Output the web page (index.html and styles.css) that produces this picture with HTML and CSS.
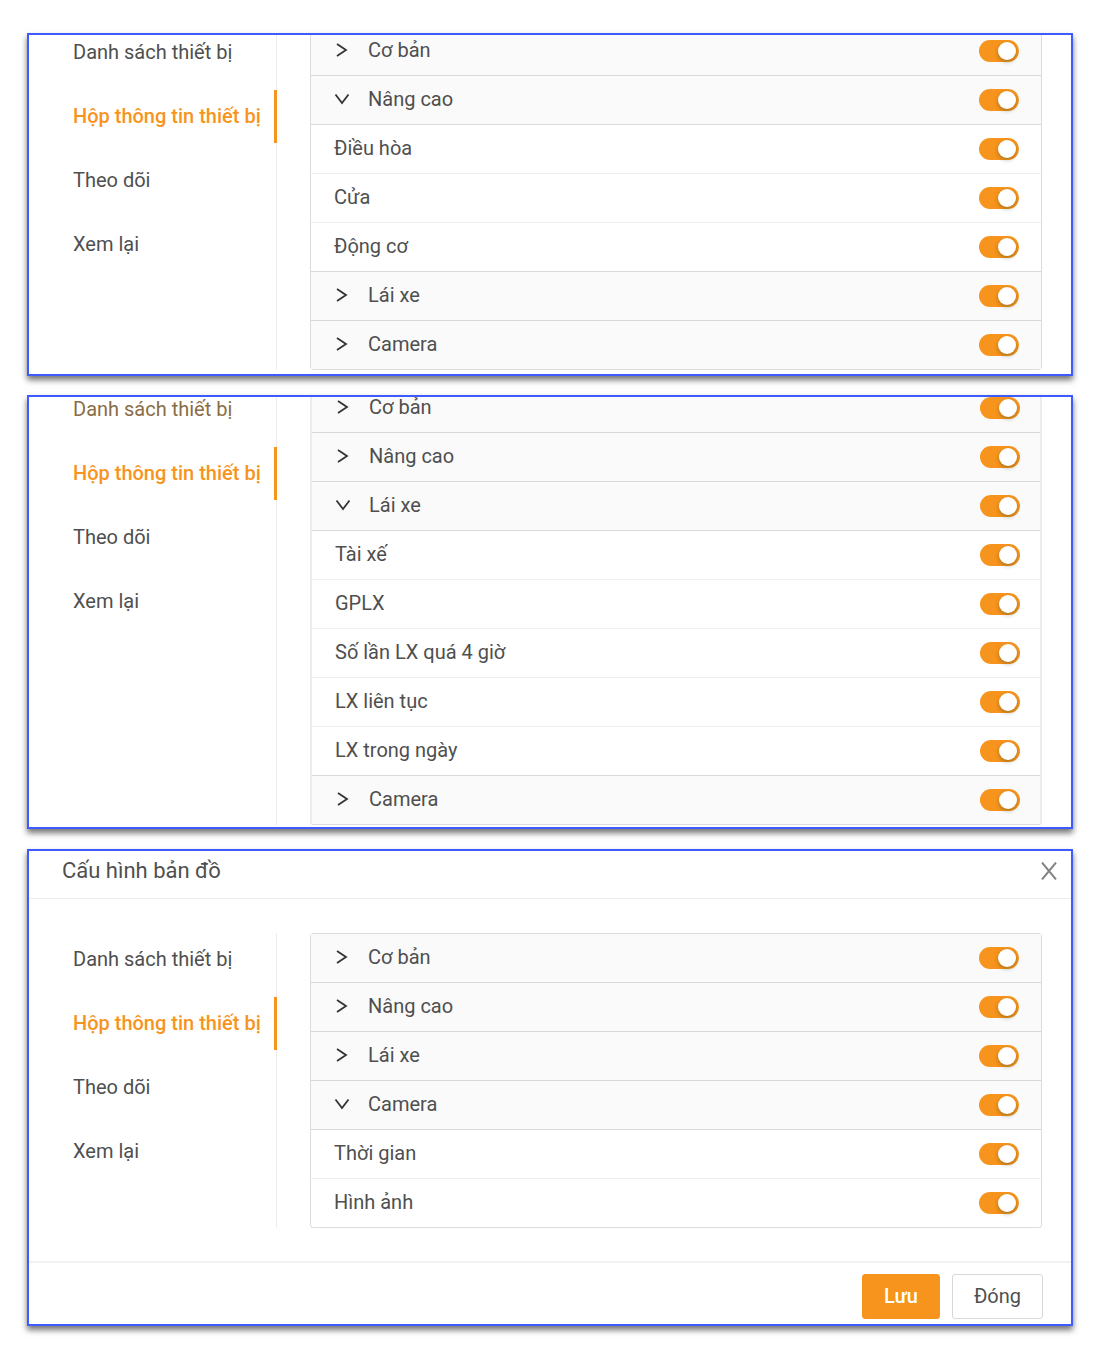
FILE: index.html
```
<!DOCTYPE html>
<html lang="vi">
<head>
<meta charset="utf-8">
<meta name="viewport" content="width=device-width, initial-scale=1">
<title>Cấu hình bản đồ</title>
<link rel="stylesheet" href="styles.css">
</head>
<body>
<svg class="sprite" aria-hidden="true">
  <symbol id="chevron-right" viewBox="0 0 16 16"><path d="M3 2 12 8 3 14"/></symbol>
  <symbol id="chevron-down" viewBox="0 0 16 16"><path d="M1.500 3.500 8 12 14.500 3.500"/></symbol>
</svg>
<main class="page">

  <section class="panel panel--advanced" aria-label="Nâng cao">
    <div class="content">
      <nav class="tabs">
        <a class="tab" href="#">Danh sách thiết bị</a>
        <a class="tab tab--active" href="#" aria-current="page">Hộp thông tin thiết bị</a>
        <a class="tab" href="#">Theo dõi</a>
        <a class="tab" href="#">Xem lại</a>
      </nav>
      <div class="list">
        <div class="row row--group"><button class="expand" type="button" aria-expanded="false"><svg class="chevron"><use href="#chevron-right"/></svg><span id="a1">Cơ bản</span></button><input class="switch" type="checkbox" role="switch" aria-labelledby="a1" checked></div>
        <div class="row row--group"><button class="expand" type="button" aria-expanded="true"><svg class="chevron"><use href="#chevron-down"/></svg><span id="a2">Nâng cao</span></button><input class="switch" type="checkbox" role="switch" aria-labelledby="a2" checked></div>
        <div class="row"><label class="name" for="a3">Điều hòa</label><input class="switch" type="checkbox" role="switch" id="a3" checked></div>
        <div class="row"><label class="name" for="a4">Cửa</label><input class="switch" type="checkbox" role="switch" id="a4" checked></div>
        <div class="row"><label class="name" for="a5">Động cơ</label><input class="switch" type="checkbox" role="switch" id="a5" checked></div>
        <div class="row row--group"><button class="expand" type="button" aria-expanded="false"><svg class="chevron"><use href="#chevron-right"/></svg><span id="a6">Lái xe</span></button><input class="switch" type="checkbox" role="switch" aria-labelledby="a6" checked></div>
        <div class="row row--group"><button class="expand" type="button" aria-expanded="false"><svg class="chevron"><use href="#chevron-right"/></svg><span id="a7">Camera</span></button><input class="switch" type="checkbox" role="switch" aria-labelledby="a7" checked></div>
      </div>
    </div>
  </section>

  <section class="panel panel--driver" aria-label="Lái xe">
    <div class="content">
      <nav class="tabs">
        <a class="tab tab--hover" href="#">Danh sách thiết bị</a>
        <a class="tab tab--active" href="#" aria-current="page">Hộp thông tin thiết bị</a>
        <a class="tab" href="#">Theo dõi</a>
        <a class="tab" href="#">Xem lại</a>
      </nav>
      <div class="list">
        <div class="row row--group"><button class="expand" type="button" aria-expanded="false"><svg class="chevron"><use href="#chevron-right"/></svg><span id="b1">Cơ bản</span></button><input class="switch" type="checkbox" role="switch" aria-labelledby="b1" checked></div>
        <div class="row row--group"><button class="expand" type="button" aria-expanded="false"><svg class="chevron"><use href="#chevron-right"/></svg><span id="b2">Nâng cao</span></button><input class="switch" type="checkbox" role="switch" aria-labelledby="b2" checked></div>
        <div class="row row--group"><button class="expand" type="button" aria-expanded="true"><svg class="chevron"><use href="#chevron-down"/></svg><span id="b3">Lái xe</span></button><input class="switch" type="checkbox" role="switch" aria-labelledby="b3" checked></div>
        <div class="row"><label class="name" for="b4">Tài xế</label><input class="switch" type="checkbox" role="switch" id="b4" checked></div>
        <div class="row"><label class="name" for="b5">GPLX</label><input class="switch" type="checkbox" role="switch" id="b5" checked></div>
        <div class="row"><label class="name" for="b6">Số lần LX quá 4 giờ</label><input class="switch" type="checkbox" role="switch" id="b6" checked></div>
        <div class="row"><label class="name" for="b7">LX liên tục</label><input class="switch" type="checkbox" role="switch" id="b7" checked></div>
        <div class="row"><label class="name" for="b8">LX trong ngày</label><input class="switch" type="checkbox" role="switch" id="b8" checked></div>
        <div class="row row--group"><button class="expand" type="button" aria-expanded="false"><svg class="chevron"><use href="#chevron-right"/></svg><span id="b9">Camera</span></button><input class="switch" type="checkbox" role="switch" aria-labelledby="b9" checked></div>
      </div>
    </div>
  </section>

  <section class="panel panel--camera" aria-labelledby="title">
    <header class="header">
      <h1 class="title" id="title">Cấu hình bản đồ</h1>
      <button class="close" type="button" aria-label="Đóng cửa sổ"><svg class="close-icon" viewBox="0 0 18 18"><path d="M2 0.500 16 17.500M16 0.500 2 17.500"/></svg></button>
    </header>
    <div class="content">
      <nav class="tabs">
        <a class="tab" href="#">Danh sách thiết bị</a>
        <a class="tab tab--active" href="#" aria-current="page">Hộp thông tin thiết bị</a>
        <a class="tab" href="#">Theo dõi</a>
        <a class="tab" href="#">Xem lại</a>
      </nav>
      <div class="list">
        <div class="row row--group"><button class="expand" type="button" aria-expanded="false"><svg class="chevron"><use href="#chevron-right"/></svg><span id="c1">Cơ bản</span></button><input class="switch" type="checkbox" role="switch" aria-labelledby="c1" checked></div>
        <div class="row row--group"><button class="expand" type="button" aria-expanded="false"><svg class="chevron"><use href="#chevron-right"/></svg><span id="c2">Nâng cao</span></button><input class="switch" type="checkbox" role="switch" aria-labelledby="c2" checked></div>
        <div class="row row--group"><button class="expand" type="button" aria-expanded="false"><svg class="chevron"><use href="#chevron-right"/></svg><span id="c3">Lái xe</span></button><input class="switch" type="checkbox" role="switch" aria-labelledby="c3" checked></div>
        <div class="row row--group"><button class="expand" type="button" aria-expanded="true"><svg class="chevron"><use href="#chevron-down"/></svg><span id="c4">Camera</span></button><input class="switch" type="checkbox" role="switch" aria-labelledby="c4" checked></div>
        <div class="row"><label class="name" for="c5">Thời gian</label><input class="switch" type="checkbox" role="switch" id="c5" checked></div>
        <div class="row"><label class="name" for="c6">Hình ảnh</label><input class="switch" type="checkbox" role="switch" id="c6" checked></div>
      </div>
    </div>
    <footer class="footer">
      <button class="btn btn--primary" type="button">Lưu</button>
      <button class="btn" type="button">Đóng</button>
    </footer>
  </section>

</main>
</body>
</html>
```

FILE: styles.css
```
* {
  box-sizing: border-box;
}

body {
  margin: 0;
  background: #fff;
  color: #4f4f4f;
  font: 20px/24px Roboto, "Noto Sans", sans-serif;
}

button {
  font: inherit;
  color: inherit;
  cursor: pointer;
}

.sprite {
  display: none;
}

.page {
  padding: 33px 33px 20px 27px;
}

.panel {
  overflow: hidden;
  border: 2px solid #3d5cff;
  background: #fff;
  box-shadow: 0 4px 6px rgba(0, 0, 0, 0.55);
}

.panel--advanced {
  padding-bottom: 4px;
}

.panel--driver {
  margin-top: 19px;
  padding-bottom: 2px;
}

.panel--camera {
  margin-top: 20px;
}

/* Sidebar and settings list, side by side */
.content {
  display: flex;
  gap: 33px;
  padding: 0 29px 0 44px;
}

/* The first two panels are scrolled a little below the list's top */
.panel--advanced .content {
  margin-top: -9px;
}

.panel--driver .content {
  margin-top: -14px;
}

.panel--camera .content {
  padding-top: 34px;
  padding-bottom: 33px;
}

.tabs {
  display: flex;
  flex: 0 0 204px;
  flex-direction: column;
  gap: 11px;
  border-right: 1px solid #ececec;
}

.tab {
  margin-right: -1px;
  padding: 14px 0 15px;
  border-right: 3px solid transparent;
  color: inherit;
  text-decoration: none;
  white-space: nowrap;
}

.tab--hover {
  color: #8a6d45;
}

.tab--active {
  border-color: #f7941d;
  color: #f7941d;
  font-weight: 500;
}

.list {
  flex: 1;
  min-width: 0;
  border: 1px solid #dcdcdc;
  border-radius: 3px;
}

.panel--driver .list {
  border-right: 2px solid #ececec;
  border-left: 2px solid #ececec;
}

.row {
  display: flex;
  align-items: center;
  justify-content: space-between;
  height: 49px;
  padding: 0 22px 0 23px;
  border-bottom: 1px solid #f0f0f0;
}

.panel--driver .row {
  padding-right: 20px;
}

.row--group,
.row:has(+ .row--group) {
  border-bottom-color: #d9d9d9;
}

.row--group {
  background: #fafafa;
}

.row:last-child {
  height: 48px;
  border-bottom: 0;
}

.name,
.expand {
  padding: 0 0 2px;
}

.expand {
  display: flex;
  align-items: center;
  gap: 18px;
  border: 0;
  background: none;
}

.chevron {
  width: 16px;
  height: 16px;
  fill: none;
  stroke: #333;
  stroke-width: 1.8;
}

.switch {
  display: flex;
  align-items: center;
  width: 40px;
  height: 22px;
  margin: 0;
  padding: 0 3px;
  border-radius: 11px;
  background: #bfbfbf;
  appearance: none;
  cursor: pointer;
}

.switch::before {
  width: 18px;
  height: 18px;
  border-radius: 50%;
  background: #fff;
  box-shadow: 0 2px 4px rgba(0, 35, 11, 0.3);
  content: "";
}

.switch:checked {
  justify-content: flex-end;
  background: #f7941d;
}

.header {
  display: flex;
  align-items: center;
  justify-content: space-between;
  height: 48px;
  padding: 0 13px 8px 33px;
  border-bottom: 1px solid #ececec;
}

.title {
  margin: 0;
  font-size: 22px;
  font-weight: 400;
}

.close {
  display: flex;
  padding: 0;
  border: 0;
  background: none;
}

.close-icon {
  width: 18px;
  height: 18px;
  fill: none;
  stroke: #858585;
  stroke-width: 2;
}

.footer {
  display: flex;
  justify-content: flex-end;
  gap: 12px;
  padding: 11px 28px 5px;
  border-top: 2px solid #f2f2f2;
}

.btn {
  height: 45px;
  padding: 0 21px 2px;
  border: 1px solid #d9d9d9;
  border-radius: 3px;
  background: #fff;
}

.btn--primary {
  border-color: #f7941d;
  background: #f7941d;
  color: #fff;
  font-weight: 500;
}
```
